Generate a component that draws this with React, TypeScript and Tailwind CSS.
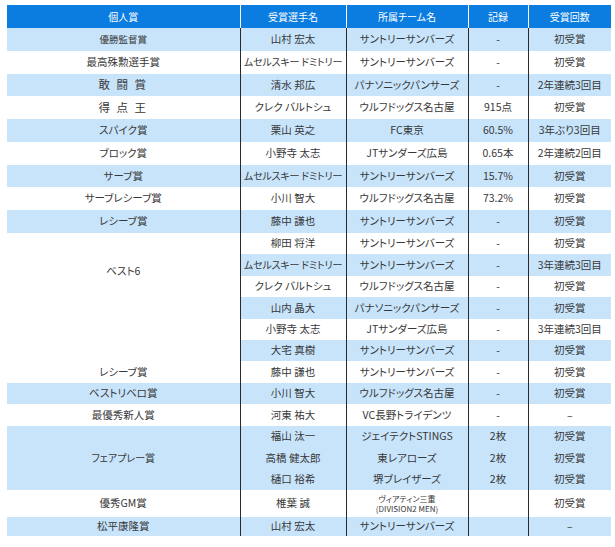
import React from 'react';

type Row = {
  award?: { text: React.ReactNode; span?: number; cls?: string };
  name: string;
  nameCls?: string;
  team: React.ReactNode;
  rec: string;
  times: string;
  blue: boolean;
  h: string;
};

const H1 = 'h-[22.75px]';
const H2 = 'h-[21.45px]';
const TIGHT = 'text-[10px] tracking-[-0.2px]';

const rows: Row[] = [
  { award: { text: '優勝監督賞', cls: 'text-[9.5px]' }, name: '山村 宏太', team: 'サントリーサンバーズ', rec: '-', times: '初受賞', blue: true, h: H1 },
  { award: { text: '最高殊勲選手賞', cls: 'text-[10.5px]' }, name: 'ムセルスキー ドミトリー', nameCls: TIGHT, team: 'サントリーサンバーズ', rec: '-', times: '初受賞', blue: false, h: H1 },
  { award: { text: '敢 闘 賞', cls: 'text-[11.5px] tracking-[2px]' }, name: '清水 邦広', team: 'パナソニックパンサーズ', rec: '-', times: '2年連続3回目', blue: true, h: H1 },
  { award: { text: '得 点 王', cls: 'text-[11.5px] tracking-[2px]' }, name: 'クレク バルトシュ', team: 'ウルフドッグス名古屋', rec: '915点', times: '初受賞', blue: false, h: H1 },
  { award: { text: 'スパイク賞' }, name: '栗山 英之', team: 'FC東京', rec: '60.5%', times: '3年ぶり3回目', blue: true, h: H1 },
  { award: { text: 'ブロック賞' }, name: '小野寺 太志', team: 'JTサンダーズ広島', rec: '0.65本', times: '2年連続2回目', blue: false, h: H1 },
  { award: { text: 'サーブ賞' }, name: 'ムセルスキー ドミトリー', nameCls: TIGHT, team: 'サントリーサンバーズ', rec: '15.7%', times: '初受賞', blue: true, h: H1 },
  { award: { text: 'サーブレシーブ賞' }, name: '小川 智大', team: 'ウルフドッグス名古屋', rec: '73.2%', times: '初受賞', blue: false, h: H1 },
  { award: { text: 'レシーブ賞' }, name: '藤中 謙也', team: 'サントリーサンバーズ', rec: '-', times: '初受賞', blue: true, h: H1 },
  { award: { text: 'ベスト6', span: 6, cls: 'text-[10.5px] bg-white align-top pt-[33px]' }, name: '柳田 将洋', team: 'サントリーサンバーズ', rec: '-', times: '初受賞', blue: false, h: H2 },
  { name: 'ムセルスキー ドミトリー', nameCls: TIGHT, team: 'サントリーサンバーズ', rec: '-', times: '3年連続3回目', blue: true, h: H2 },
  { name: 'クレク バルトシュ', team: 'ウルフドッグス名古屋', rec: '-', times: '初受賞', blue: false, h: H2 },
  { name: '山内 晶大', team: 'パナソニックパンサーズ', rec: '-', times: '初受賞', blue: true, h: H2 },
  { name: '小野寺 太志', team: 'JTサンダーズ広島', rec: '-', times: '3年連続3回目', blue: false, h: H2 },
  { name: '大宅 真樹', team: 'サントリーサンバーズ', rec: '-', times: '初受賞', blue: true, h: H2 },
  { award: { text: 'レシーブ賞' }, name: '藤中 謙也', team: 'サントリーサンバーズ', rec: '-', times: '初受賞', blue: false, h: H2 },
  { award: { text: 'ベストリベロ賞' }, name: '小川 智大', team: 'ウルフドッグス名古屋', rec: '-', times: '初受賞', blue: true, h: H2 },
  { award: { text: '最優秀新人賞' }, name: '河東 祐大', team: 'VC長野トライデンツ', rec: '-', times: '–', blue: false, h: H2 },
  { award: { text: 'フェアプレー賞', span: 3, cls: 'bg-[#c7e4fb] text-[10px]' }, name: '福山 汰一', team: 'ジェイテクトSTINGS', rec: '2枚', times: '初受賞', blue: true, h: H2 },
  { name: '高橋 健太郎', team: '東レアローズ', rec: '2枚', times: '初受賞', blue: true, h: H2 },
  { name: '樋口 裕希', team: '堺ブレイザーズ', rec: '2枚', times: '初受賞', blue: true, h: H2 },
  {
    award: { text: '優秀GM賞' },
    name: '椎葉 誠',
    team: (
      <div className="flex flex-col items-center text-[8px] leading-[10px]">
        <span>ヴィアティン三重</span>
        <span>(DIVISION2 MEN)</span>
      </div>
    ),
    rec: '',
    times: '初受賞',
    blue: false,
    h: 'h-[27px]',
  },
  { award: { text: '松平康隆賞' }, name: '山村 宏太', team: 'サントリーサンバーズ', rec: '', times: '–', blue: true, h: 'h-[19px]' },
];

const headers = ['個人賞', '受賞選手名', '所属チーム名', '記録', '受賞回数'];

export default function App() {
  return (
    <div className="w-[615px] h-[547px] bg-white pl-[7px] pt-[5px] font-['Noto_Sans_CJK_JP','Noto_Sans',sans-serif] [font-feature-settings:'palt'] text-[#383838]">
      <table className="table-fixed border-collapse w-[604px]">
        <colgroup>
          <col className="w-[233px]" />
          <col className="w-[106px]" />
          <col className="w-[122px]" />
          <col className="w-[60px]" />
          <col className="w-[83px]" />
        </colgroup>
        <thead>
          <tr className="h-[23px] bg-[#0b7ce0] text-white">
            {headers.map((h, i) => (
              <th
                key={h}
                className={`p-0 text-[10px] font-normal text-center align-middle leading-none ${i > 0 ? 'border-l border-white' : ''}`}
              >
                {h}
              </th>
            ))}
          </tr>
        </thead>
        <tbody>
          {rows.map((r, i) => {
            const bg = r.blue ? 'bg-[#c7e4fb]' : 'bg-white';
            const cell = 'p-0 text-center align-middle leading-none whitespace-nowrap border-l border-[#2a2a2a]';
            return (
              <tr key={i} className={`${r.h} ${bg}`}>
                {r.award && (
                  <td
                    rowSpan={r.award.span ?? 1}
                    className={`p-0 text-center align-middle leading-none whitespace-nowrap ${r.award.cls ?? 'text-[10.5px]'}`}
                  >
                    {r.award.text}
                  </td>
                )}
                <td className={`${cell} ${r.nameCls ?? 'text-[10.5px]'}`}>{r.name}</td>
                <td className={`${cell} text-[10.5px]`}>{r.team}</td>
                <td className={`${cell} text-[10.5px]`}>{r.rec}</td>
                <td className={`${cell} text-[10.5px]`}>{r.times}</td>
              </tr>
            );
          })}
        </tbody>
      </table>
    </div>
  );
}
